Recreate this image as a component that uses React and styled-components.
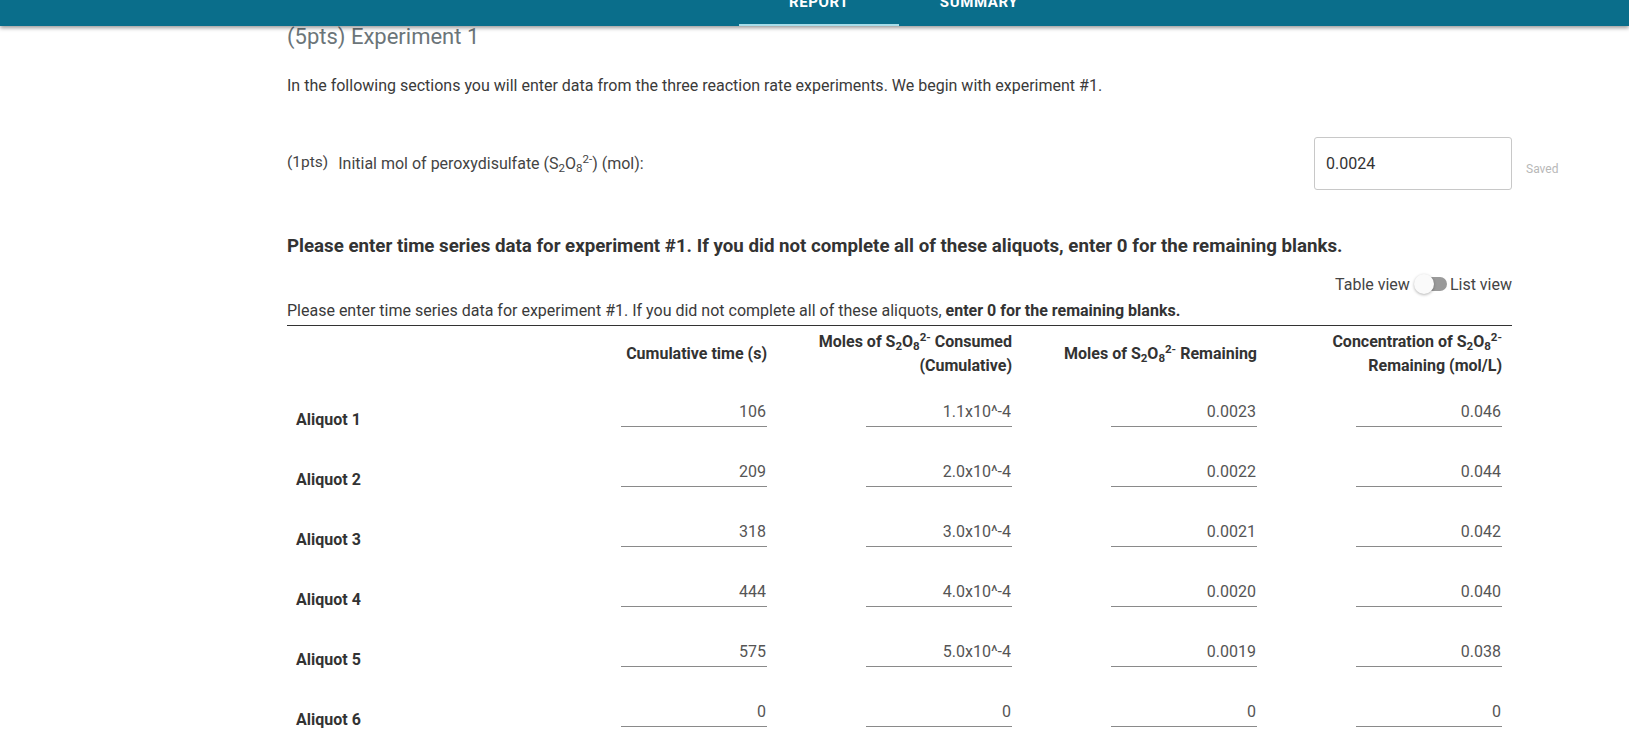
import React from "react";
import styled, { createGlobalStyle } from "styled-components";

const Global = createGlobalStyle`
  html, body { margin: 0; padding: 0; background: #fff; }
  body { font-family: Roboto, "Liberation Sans", Arial, sans-serif; color: #333; }
  * { box-sizing: border-box; }
`;

const TopBar = styled.header`
  position: relative;
  z-index: 2;
  height: 26px;
  background: #0a6e8b;
  box-shadow: 0 2px 4px rgba(0, 0, 0, 0.4);
  overflow: hidden;
  display: flex;
  padding-left: 739px;
`;

const Tab = styled.div`
  width: 160px;
  height: 26px;
  display: flex;
  justify-content: center;
  align-items: flex-start;
  border-bottom: 2px solid ${(p) => (p.$active ? "#a8dde9" : "transparent")};
`;

const TabLabel = styled.span`
  margin-top: -5px;
  font-size: 15px;
  line-height: 14px;
  font-weight: 700;
  letter-spacing: 0.6px;
  color: #fff;
  text-transform: uppercase;
`;

const Main = styled.main`
  padding: 0 117px 0 287px;
`;

const Title = styled.h2`
  margin: 0;
  font-size: 22px;
  line-height: 22px;
  font-weight: 400;
  color: #6b7579;
`;

const Intro = styled.p`
  margin: 28px 0 0;
  font-size: 16px;
  line-height: 20px;
  color: #3a3a3a;
`;

const PtsRow = styled.div`
  margin: 41px -64px 0 0;
  display: flex;
  align-items: center;
`;

const PtsTag = styled.span`
  font-size: 15.5px;
  color: #444;
  margin-right: 10px;
  position: relative;
  top: -2px;
`;

const PtsLabel = styled.span`
  flex: 1;
  font-size: 16px;
  color: #444;
`;

const BoxInput = styled.input`
  width: 198px;
  height: 53px;
  border: 1px solid #c8c8c8;
  border-radius: 3px;
  padding: 0 11px;
  font-family: Roboto, "Liberation Sans", Arial, sans-serif;
  font-size: 16px;
  color: #333;
  outline: none;
`;

const Saved = styled.span`
  width: 64px;
  padding-left: 14px;
  font-size: 12px;
  color: #b8b8b8;
  margin-top: 10px;
`;

const Heading = styled.h3`
  margin: 44px 0 0;
  font-size: 18.7px;
  line-height: 24px;
  font-weight: 700;
  color: #333;
`;

const ToggleRow = styled.div`
  margin-top: 16px;
  height: 20px;
  display: flex;
  justify-content: flex-end;
  align-items: center;
  font-size: 16px;
  color: #444;
`;

const Track = styled.span`
  width: 31px;
  height: 14px;
  border-radius: 7px;
  background: #9a9a9a;
  display: flex;
  align-items: center;
  margin: 0 3px 0 6px;
`;

const Thumb = styled.span`
  width: 20px;
  height: 20px;
  border-radius: 50%;
  background: #fafafa;
  box-shadow: 0 1px 3px rgba(0, 0, 0, 0.3);
  margin-left: -2px;
`;

const Caption = styled.p`
  margin: 7px 0 0;
  font-size: 16px;
  line-height: 20px;
  color: #3a3a3a;
  b { font-weight: 700; color: #333; }
`;

const Table = styled.div`
  margin-top: 4px;
  border-top: 1px solid #333;
`;

const HeadRow = styled.div`
  display: grid;
  grid-template-columns: repeat(5, 1fr);
  align-items: center;
  padding: 4px 0 11px;
`;

const HeadCell = styled.div`
  padding: 0 10px;
  text-align: right;
  font-size: 16px;
  line-height: 24px;
  font-weight: 700;
  color: #333;
`;

const DataRow = styled.div`
  display: grid;
  grid-template-columns: repeat(5, 1fr);
  height: 60px;
`;

const RowLabel = styled.div`
  padding: 0 9px;
  align-self: center;
  font-size: 16px;
  font-weight: 700;
  color: #333;
`;

const Cell = styled.div`
  padding: 8px 10px 0;
  display: flex;
  justify-content: flex-end;
  align-items: flex-start;
`;

const LineInput = styled.input`
  width: 146px;
  height: 30px;
  border: none;
  border-bottom: 1px solid #8a8a8a;
  padding: 0 1px 0 0;
  text-align: right;
  font-family: Roboto, "Liberation Sans", Arial, sans-serif;
  font-size: 16px;
  color: #555;
  background: transparent;
  outline: none;
`;

const Sub = styled.sub`
  font-size: 0.72em;
  line-height: 0;
  vertical-align: -0.3em;
`;

const Sup = styled.sup`
  font-size: 0.72em;
  line-height: 0;
  vertical-align: 0.55em;
`;

const Ion = () => (
  <>
    S<Sub>2</Sub>O<Sub>8</Sub>
    <Sup>2-</Sup>
  </>
);

const rows = [
  ["106", "1.1x10^-4", "0.0023", "0.046"],
  ["209", "2.0x10^-4", "0.0022", "0.044"],
  ["318", "3.0x10^-4", "0.0021", "0.042"],
  ["444", "4.0x10^-4", "0.0020", "0.040"],
  ["575", "5.0x10^-4", "0.0019", "0.038"],
  ["0", "0", "0", "0"],
];

export default function App() {
  return (
    <>
      <Global />
      <TopBar>
        <Tab $active>
          <TabLabel>Report</TabLabel>
        </Tab>
        <Tab>
          <TabLabel>Summary</TabLabel>
        </Tab>
      </TopBar>
      <Main>
        <Title>(5pts) Experiment 1</Title>
        <Intro>
          In the following sections you will enter data from the three reaction rate
          experiments. We begin with experiment #1.
        </Intro>
        <PtsRow>
          <PtsTag>(1pts)</PtsTag>
          <PtsLabel>
            Initial mol of peroxydisulfate (<Ion />) (mol):
          </PtsLabel>
          <BoxInput defaultValue="0.0024" readOnly />
          <Saved>Saved</Saved>
        </PtsRow>
        <Heading>
          Please enter time series data for experiment #1. If you did not complete all of
          these aliquots, enter 0 for the remaining blanks.
        </Heading>
        <ToggleRow>
          Table view
          <Track>
            <Thumb />
          </Track>
          List view
        </ToggleRow>
        <Caption>
          Please enter time series data for experiment #1. If you did not complete all of
          these aliquots, <b>enter 0 for the remaining blanks.</b>
        </Caption>
        <Table>
          <HeadRow>
            <HeadCell />
            <HeadCell>Cumulative time (s)</HeadCell>
            <HeadCell>
              Moles of <Ion /> Consumed
              <br />
              (Cumulative)
            </HeadCell>
            <HeadCell>
              Moles of <Ion /> Remaining
            </HeadCell>
            <HeadCell>
              Concentration of <Ion />
              <br />
              Remaining (mol/L)
            </HeadCell>
          </HeadRow>
          {rows.map((r, i) => (
            <DataRow key={i}>
              <RowLabel>Aliquot {i + 1}</RowLabel>
              {r.map((v, j) => (
                <Cell key={j}>
                  <LineInput defaultValue={v} readOnly />
                </Cell>
              ))}
            </DataRow>
          ))}
        </Table>
      </Main>
    </>
  );
}
